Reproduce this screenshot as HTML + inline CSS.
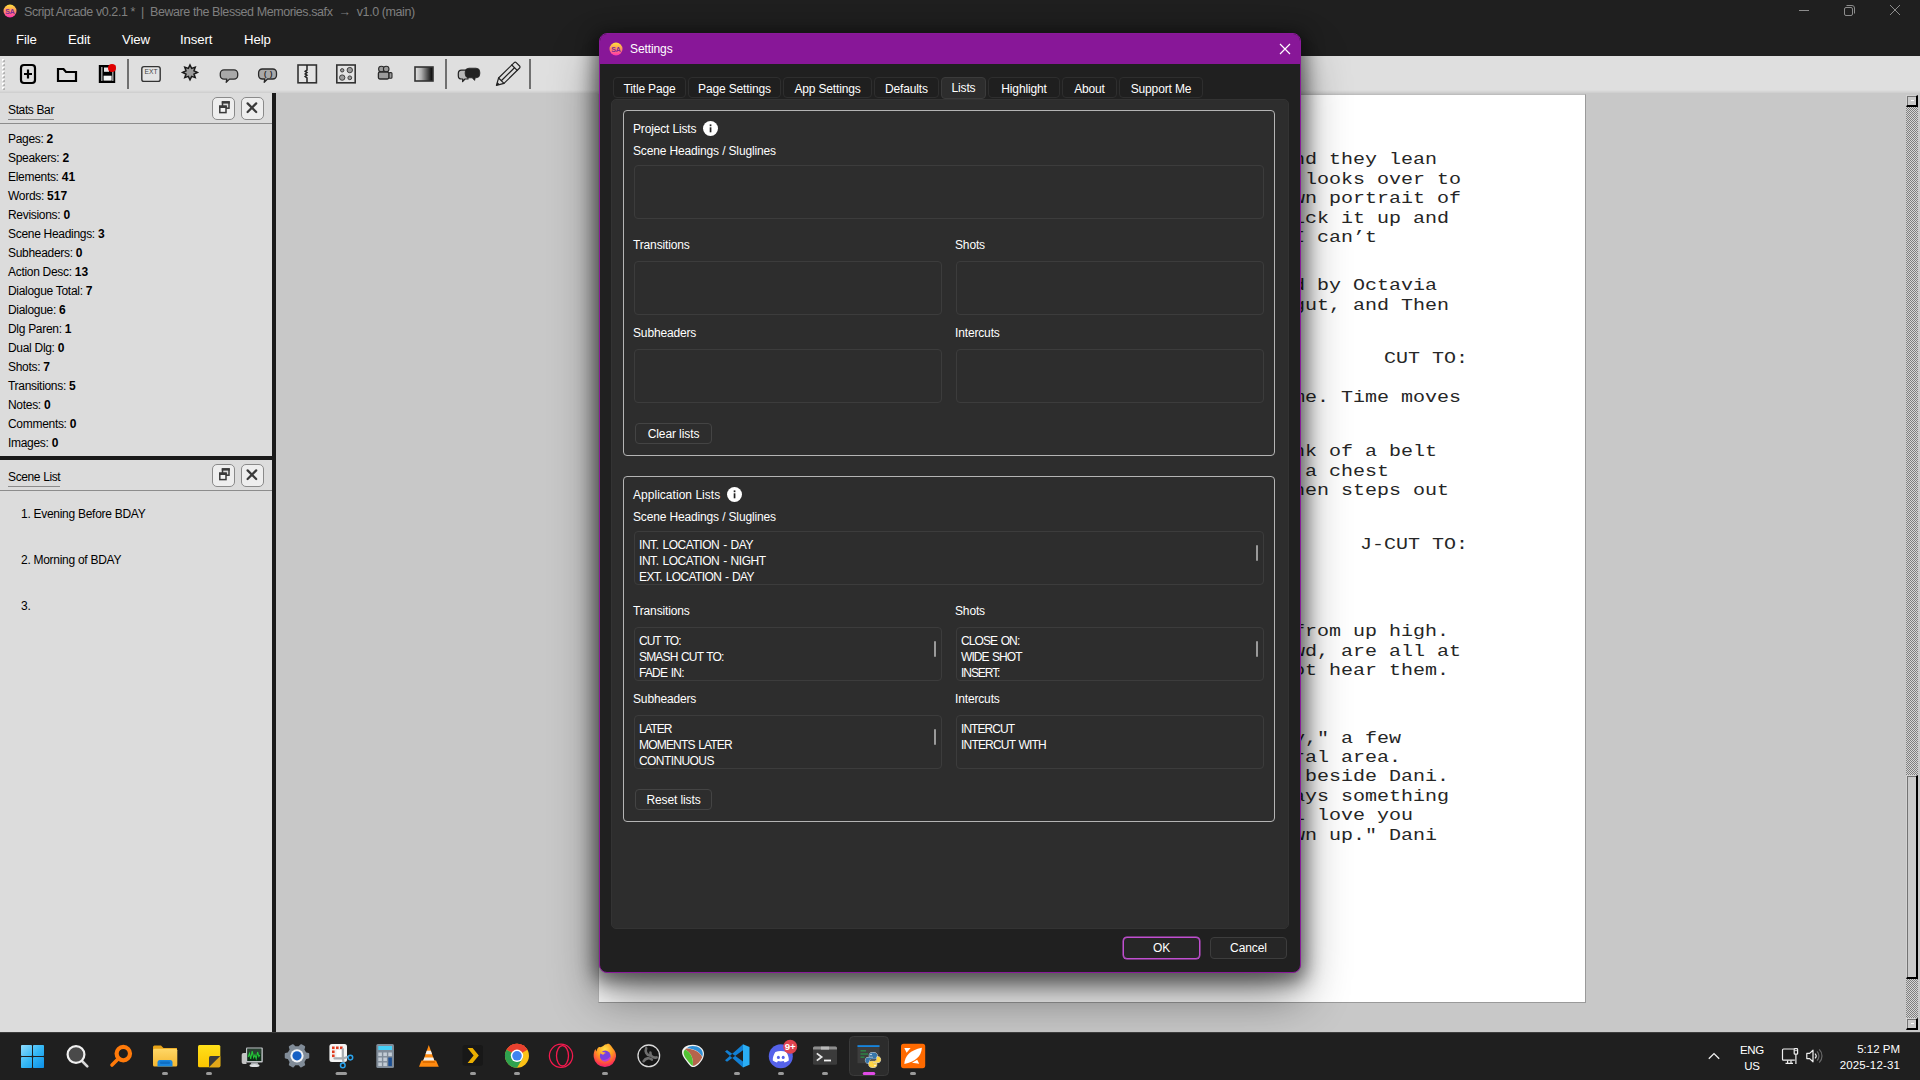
<!DOCTYPE html>
<html lang="en">
<head>
<meta charset="utf-8">
<title>Script Arcade - Settings</title>
<style>
*{box-sizing:border-box;margin:0;padding:0}
html,body{width:1920px;height:1080px;overflow:hidden;background:#c8c8c8}
body{position:relative;font-family:"Liberation Sans",sans-serif;font-size:12px;color:#000}
.abs{position:absolute}
.t{position:absolute;white-space:nowrap;line-height:16px;height:16px}
/* ---------- main window chrome ---------- */
#titlebar{left:0;top:0;width:1920px;height:56px;background:#1f1f1f}
#titlebar .ttl{color:#7f7f7f;font-size:12.5px;top:4px;letter-spacing:-.42px}
.menu{color:#fff;font-size:13.2px;top:32px;letter-spacing:-.1px}
#toolbar{left:0;top:56px;width:1920px;height:37px;background:linear-gradient(#dfdfdf 0,#dfdfdf 34px,#cdcdcd 37px)}
.tsep{position:absolute;top:3px;width:2px;height:30px;background:#707070}
/* ---------- docks ---------- */
#dockL{left:0;top:93px;width:272px;height:939px;background:#dcdcdc}
.vsplit{left:272px;top:93px;width:4px;height:939px;background:#1a1a1a}
.hsplit{left:0;top:456px;width:272px;height:4px;background:#1a1a1a}
.dtitle{font-size:12px;color:#000;border-bottom:1px solid #8a8a8a;height:18px;line-height:16px;letter-spacing:-.37px}
.dline{position:absolute;left:0;width:272px;height:1px;background:#8c8c8c}
.dbtn{position:absolute;width:23px;height:23px;border:1px solid #8a8a8a;border-radius:5px;background:#eee}
.stat{left:8px;font-size:12px;letter-spacing:-.3px}
.stat b{font-weight:bold;letter-spacing:0}
.scene{left:21px;font-size:12px;letter-spacing:-.28px}
/* ---------- canvas ---------- */
#canvas{left:276px;top:93px;width:1644px;height:939px;background:#c8c8c8}
#page{left:598px;top:94px;width:988px;height:909px;background:#fff;border:1px solid #9a9a9a;border-top-color:#bdbdbd;border-left-color:#bdbdbd}
.sl{position:absolute;white-space:pre;font-family:"Liberation Mono",monospace;font-size:16.5px;line-height:20px;height:20px;color:#262626;transform:scaleX(1.21212);transform-origin:0 0}
/* ---------- taskbar ---------- */
#taskbar{left:0;top:1032px;width:1920px;height:48px;background:#1f1f1f}
.tray{color:#fff;font-size:11.5px}

/* ---------- settings dialog ---------- */
#dlg{left:599px;top:33px;width:702px;height:940px;background:#202020;border:1px solid #8a1a9a;border-radius:8px;box-shadow:0 24px 48px 0 rgba(0,0,0,.45),0 4px 18px 5px rgba(0,0,0,.48);overflow:hidden;color:#fff}
#dlgttl{left:0;top:0;width:700px;height:30px;background:#881798}
#dlgttl .t{left:30px;top:7px;font-size:12px;color:#fff;letter-spacing:-.1px}
.tab{position:absolute;top:43px;height:21px;border:1px solid #2e2e2e;border-radius:4px;background:#1f1f1f;color:#fff;font-size:12px;line-height:23px;text-align:center;white-space:nowrap;letter-spacing:-.15px}
.tab.sel{top:43px;height:22px;line-height:21px;background:#2d2d2d;border-color:#3b3b3b}
#pane{left:11px;top:65px;width:678px;height:830px;background:#2d2d2d;border:1px solid #333;border-radius:5px}
.gb{position:absolute;left:23px;width:652px;border:1px solid #b4b4b4;border-radius:4px;background:#2d2d2d}
.lb{position:absolute;border:1px solid #3c3c3c;border-radius:4px;background:#2d2d2d;height:54px;overflow:hidden}
.lb .li{position:absolute;left:4px;word-spacing:1px;white-space:nowrap;font-size:12px;line-height:16px;letter-spacing:-.45px;color:#fff}
.lbl{position:absolute;white-space:nowrap;font-size:12px;line-height:16px;height:16px;color:#fff;letter-spacing:-.15px}
.btn{position:absolute;height:21px;padding-top:1px;border:1px solid #444;border-radius:4px;background:#2d2d2d;color:#fff;font-size:12px;line-height:19px;text-align:center;letter-spacing:-.1px}
.info{position:absolute;width:15px;height:15px;border-radius:50%;background:#fff}
.sbar{position:absolute;width:2px;height:16px;background:#9a9a9a;border-radius:1px}

#vsb{left:1906px;top:107px;width:12px;height:911px;background-color:#b4b4b4;background-image:repeating-conic-gradient(#7e7e7e 0 25%,#d6d6d6 0 50%);background-size:2px 2px}
.sbx{left:1906px;width:12px;background:#cbcbcb;border:1px solid #d2d2d2;border-right:2px solid #000;border-bottom:2px solid #000;box-shadow:inset 1px 1px 0 #737373}
</style>
</head>
<body>
<!-- MAIN WINDOW TITLE + MENU -->
<div id="titlebar" class="abs">
<svg class="abs" style="left:3px;top:4px" width="14" height="14" viewBox="0 0 14 14"><defs><linearGradient id="lg0" x1="0" y1="0" x2="0" y2="1"><stop offset="0" stop-color="#ffe23a"/><stop offset=".45" stop-color="#ff9a5a"/><stop offset="1" stop-color="#ff2fb4"/></linearGradient></defs><circle cx="7" cy="7" r="6.500" fill="url(#lg0)"/><text x="7" y="9.600" font-family="Liberation Sans,sans-serif" font-weight="bold" font-size="7" text-anchor="middle" fill="#7a2a9a">SA</text></svg>
  <div class="t ttl" style="left:24px">Script Arcade v0.2.1 *&nbsp; |&nbsp; Beware the Blessed Memories.safx&nbsp; →&nbsp; v1.0 (main)</div>
  <svg class="abs" style="left:1790px;top:0" width="130" height="23" viewBox="0 0 130 23"><g stroke="#8c8c8c" stroke-width="1" fill="none"><path d="M9 10.5 H19"/><rect x="54.5" y="7.5" width="8" height="8" rx="1.5"/><path d="M56.5 5.5 H62 a2.5 2.5 0 0 1 2.500 2.500 V13.500"/><path d="M100 5 L110 15 M110 5 L100 15"/></g></svg>
<div class="t menu" style="left:16px">File</div>
  <div class="t menu" style="left:68px">Edit</div>
  <div class="t menu" style="left:122px">View</div>
  <div class="t menu" style="left:180px">Insert</div>
  <div class="t menu" style="left:244px">Help</div>
</div>
<!-- TOOLBAR -->
<div id="toolbar" class="abs">
  <svg class="abs" style="left:0;top:0" width="600" height="37" viewBox="0 56 600 37">
<!-- grip handle -->
<g fill="#fff"><rect x="2" y="59" width="2" height="2"/><rect x="2" y="63" width="2" height="2"/><rect x="2" y="67" width="2" height="2"/><rect x="2" y="71" width="2" height="2"/><rect x="2" y="75" width="2" height="2"/><rect x="2" y="79" width="2" height="2"/><rect x="2" y="83" width="2" height="2"/><rect x="2" y="87" width="2" height="2"/></g>
<g fill="#a8a8a8"><rect x="3" y="60" width="2" height="2" opacity=".8"/><rect x="3" y="64" width="2" height="2" opacity=".8"/><rect x="3" y="68" width="2" height="2" opacity=".8"/><rect x="3" y="72" width="2" height="2" opacity=".8"/><rect x="3" y="76" width="2" height="2" opacity=".8"/><rect x="3" y="80" width="2" height="2" opacity=".8"/><rect x="3" y="84" width="2" height="2" opacity=".8"/><rect x="3" y="88" width="2" height="2" opacity=".8"/></g>
<g fill="#fff"><rect x="2" y="59" width="1.6" height="1.6"/><rect x="2" y="63" width="1.6" height="1.6"/><rect x="2" y="67" width="1.6" height="1.6"/><rect x="2" y="71" width="1.6" height="1.6"/><rect x="2" y="75" width="1.6" height="1.6"/><rect x="2" y="79" width="1.6" height="1.6"/><rect x="2" y="83" width="1.6" height="1.6"/><rect x="2" y="87" width="1.6" height="1.6"/></g>
<!-- new file -->
<rect x="21" y="65" width="14" height="18" rx="3" fill="none" stroke="#000" stroke-width="2.2"/>
<path d="M24 74 H32 M28 69.500 V78.500" stroke="#000" stroke-width="2.2" fill="none"/>
<!-- open folder -->
<path d="M58 81 V69 H63.500 L66 72 H76 V81 Z" fill="none" stroke="#000" stroke-width="2.2" stroke-linejoin="miter"/>
<!-- save -->
<rect x="98.800" y="65" width="16.400" height="18" fill="#000"/>
<rect x="101.300" y="67" width="1.100" height="14" fill="#cfcfcf"/>
<rect x="112.300" y="71" width="1.100" height="10" fill="#cfcfcf"/>
<rect x="104" y="67.500" width="5" height="4.300" fill="#e6e6e6"/>
<rect x="103.600" y="75.700" width="8" height="4.900" fill="#f6f6f6"/>
<circle cx="112" cy="68" r="4" fill="#e00000"/>
<!-- EXT -->
<rect x="141.800" y="66.600" width="18.400" height="14.800" rx="2.200" fill="#e4e4e4" stroke="#333" stroke-width="1.400"/>
<text x="151" y="74" font-family="Liberation Sans,sans-serif" font-size="7.500" text-anchor="middle" fill="#444" textLength="13" lengthAdjust="spacingAndGlyphs">EXT</text>
<!-- burst -->
<polygon points="190.00,65.00 191.65,68.43 195.23,67.17 193.97,70.75 197.40,72.40 193.97,74.05 195.23,77.63 191.65,76.37 190.00,79.80 188.35,76.37 184.77,77.63 186.03,74.05 182.60,72.40 186.03,70.75 184.77,67.17 188.35,68.43" fill="#9b9b9b" stroke="#1a1a1a" stroke-width="1.500" stroke-linejoin="miter"/>
<!-- speech bubble -->
<path d="M224 69.900 H234 a3.700 3.700 0 0 1 3.700 3.700 v1.800 a3.700 3.700 0 0 1 -3.700 3.700 H229.500 L226.200 82.400 L226.800 79.100 H224 a3.700 3.700 0 0 1 -3.700 -3.700 v-1.800 a3.700 3.700 0 0 1 3.700 -3.700 Z" fill="#a9a9a9" stroke="#2a2a2a" stroke-width="1.300" stroke-linejoin="round"/>
<!-- paren bubble -->
<path d="M262.300 69 H272.800 a3.700 3.700 0 0 1 3.700 3.700 v2.600 a3.700 3.700 0 0 1 -3.700 3.700 H267.500 L264.200 82.400 L264.800 79 H262.300 a3.700 3.700 0 0 1 -3.700 -3.700 v-2.600 a3.700 3.700 0 0 1 3.700 -3.700 Z" fill="#a9a9a9" stroke="#2a2a2a" stroke-width="1.300" stroke-linejoin="round"/>
<text x="265.300" y="76.100" font-family="Liberation Sans,sans-serif" font-weight="bold" font-size="7.200" text-anchor="middle" fill="#222">(</text><text x="271.200" y="76.100" font-family="Liberation Sans,sans-serif" font-weight="bold" font-size="7.200" text-anchor="middle" fill="#222">)</text>
<!-- split -->
<rect x="298" y="65" width="18.400" height="17.800" fill="#e4e4e4" stroke="#333" stroke-width="1.600"/>
<path d="M307 65 V70 l-1.800 1.300 l1.800 1.300 l-1.800 1.300 l1.800 1.300 l-1.800 1.300 l1.800 1.300 V82.800" fill="none" stroke="#222" stroke-width="1.500"/>
<!-- four dots -->
<rect x="336.800" y="65" width="18.400" height="17.800" fill="#e4e4e4" stroke="#333" stroke-width="1.600"/>
<circle cx="342.200" cy="70.300" r="1.700" fill="#9b9b9b" stroke="#333" stroke-width=".9"/>
<circle cx="349.800" cy="70.100" r="2.700" fill="#9b9b9b" stroke="#333" stroke-width=".9"/>
<circle cx="342.200" cy="77.600" r="2.700" fill="#9b9b9b" stroke="#333" stroke-width=".9"/>
<circle cx="349.800" cy="77.800" r="1.900" fill="#9b9b9b" stroke="#333" stroke-width=".9"/>
<!-- camera -->
<circle cx="381.400" cy="69" r="2.800" fill="#9b9b9b" stroke="#2a2a2a" stroke-width="1.100"/>
<circle cx="386.200" cy="69" r="2.800" fill="#9b9b9b" stroke="#2a2a2a" stroke-width="1.100"/>
<rect x="388.800" y="72.600" width="3.200" height="5.600" rx="1" fill="#9b9b9b" stroke="#2a2a2a" stroke-width="1.100"/>
<rect x="378.400" y="72" width="10.400" height="7" rx="1.400" fill="#9b9b9b" stroke="#2a2a2a" stroke-width="1.300"/>
<!-- gradient -->
<defs><linearGradient id="tg" x1="0" y1="0" x2="1" y2="0"><stop offset="0" stop-color="#e6e6e6"/><stop offset=".35" stop-color="#b0b0b0"/><stop offset=".9" stop-color="#161616"/><stop offset="1" stop-color="#111"/></linearGradient></defs>
<rect x="415" y="67" width="18" height="14" fill="url(#tg)" stroke="#333" stroke-width="1.600"/>
<!-- dual bubbles -->
<path d="M461.600 70.200 H468 V79 H465 L462.600 81.600 L462.800 79 H461.600 a3.300 3.300 0 0 1 -3.300 -3.300 v-2.200 a3.300 3.300 0 0 1 3.300 -3.300 Z" fill="#b9b9b9" stroke="#222" stroke-width="1.200" stroke-linejoin="round"/>
<path d="M469 68.200 H476 a3.800 3.800 0 0 1 3.800 3.800 v2 a3.800 3.800 0 0 1 -3.800 3.800 H475.200 L474.600 80.400 L472.200 77.800 H469 a3.800 3.800 0 0 1 -3.800 -3.800 v-2 a3.800 3.800 0 0 1 3.800 -3.800 Z" fill="#222" stroke="#222" stroke-width=".8" stroke-linejoin="round"/>
<!-- pencil -->
<g fill="none" stroke="#222" stroke-width="1.200" stroke-linejoin="round" stroke-linecap="round">
<path d="M496.400 85.400 L498.600 78 L514.200 62.600 a1.400 1.400 0 0 1 2 0 L519.600 66 a1.400 1.400 0 0 1 0 2 L504 83.400 Z"/>
<path d="M498.600 78 L504 83.400 M501.300 80.700 L514.500 67.700"/>
<path d="M511.800 65 L517.200 70.400"/>
</g>
<path d="M496.400 85.400 L497.400 82 L499.800 84.400 Z" fill="#222"/>
</svg>
  <div class="tsep" style="left:127px"></div>
  <div class="tsep" style="left:445px"></div>
  <div class="tsep" style="left:529px"></div>
</div>
<!-- CANVAS -->
<div id="canvas" class="abs"></div>
<div id="page" class="abs"></div>
<!-- SCRIPT TEXT -->
<div class="sl" style="left:861px;top:150px">Dani and Octavia sit side by side, and they lean</div>
<div class="sl" style="left:873px;top:170px">against each other quietly. Octavia looks over to</div>
<div class="sl" style="left:885px;top:189px">the mantle, where a small hand-drawn portrait of</div>
<div class="sl" style="left:861px;top:209px">the two of them sits. She moves to pick it up and</div>
<div class="sl" style="left:861px;top:228px">hold it close, smiling softly. She. I can’t</div>
<div class="sl" style="left:873px;top:276px">A hand on her shoulder. Dani is held by Octavia</div>
<div class="sl" style="left:909px;top:296px">for a long while. Lights slowly gut, and Then</div>
<div class="sl" style="left:837px;top:388px">The room has not changed since that time. Time moves</div>
<div class="sl" style="left:861px;top:442px">forward, marked only by the soft clink of a belt</div>
<div class="sl" style="left:921px;top:462px">buckle and the quiet opening of a chest</div>
<div class="sl" style="left:885px;top:481px">of drawers nearby. Dani dresses, then steps out</div>
<div class="sl" style="left:873px;top:622px">We see the neighbourhood, rooftops from up high.</div>
<div class="sl" style="left:933px;top:642px">Birds, children, a distant crowd, are all at</div>
<div class="sl" style="left:933px;top:661px">play, though from here we cannot hear them.</div>
<div class="sl" style="left:897px;top:729px">A hand-painted banner reads “Happy," a few</div>
<div class="sl" style="left:957px;top:748px">balloons hang about the central area.</div>
<div class="sl" style="left:945px;top:767px">Octavia arranges a few plates beside Dani.</div>
<div class="sl" style="left:933px;top:787px">Octavia leans in closely and says something</div>
<div class="sl" style="left:981px;top:806px">like, “No matter what, I’ll love you</div>
<div class="sl" style="left:993px;top:826px">even when you are all grown up." Dani</div>
<div class="sl" style="left:1384px;top:349px">CUT TO:</div>
<div class="sl" style="left:1360px;top:535px">J-CUT TO:</div>
<!-- CANVAS SCROLLBAR -->
<div class="abs" id="vsb"></div>
<div class="abs sbx" style="top:95px;height:12px"><div class="abs" style="left:4px;top:4px;width:3px;height:1px;background:#fff"></div></div>
<div class="abs sbx" style="top:775px;height:204px"></div>
<div class="abs sbx" style="top:1018px;height:12px"><div class="abs" style="left:4px;top:4px;width:3px;height:1px;background:#fff"></div></div>
<!-- LEFT DOCK -->
<div id="dockL" class="abs"></div>
<div class="abs vsplit"></div>
<div class="abs hsplit"></div>
<!-- STATS BAR -->
<div class="t dtitle" style="left:8px;top:102px">Stats Bar</div>
<div class="dline" style="top:123px"></div>
<div class="dbtn" style="left:212px;top:97px"><svg width="21" height="21" viewBox="0 0 21 21"><rect x="9.500" y="4" width="6.500" height="6.200" fill="#dcdcdc" stroke="#3a3a3a" stroke-width="1.500"/><rect x="8.800" y="3.200" width="8" height="2.400" fill="#3a3a3a"/><rect x="6.800" y="8.400" width="6.200" height="6.200" fill="#f4f4f4" stroke="#3a3a3a" stroke-width="1.500"/><rect x="6" y="7.400" width="7.800" height="2.600" fill="#3a3a3a"/></svg></div><div class="dbtn" style="left:241px;top:97px"><svg width="21" height="21" viewBox="0 0 21 21"><path d="M5.600 5.400 L14.200 14 M14.200 5.400 L5.600 14" stroke="#3a3a3a" stroke-width="2.200" stroke-linecap="round" fill="none"/></svg></div>
<div class="t stat" style="top:131px">Pages: <b>2</b></div>
<div class="t stat" style="top:150px">Speakers: <b>2</b></div>
<div class="t stat" style="top:169px">Elements: <b>41</b></div>
<div class="t stat" style="top:188px">Words: <b>517</b></div>
<div class="t stat" style="top:207px">Revisions: <b>0</b></div>
<div class="t stat" style="top:226px">Scene Headings: <b>3</b></div>
<div class="t stat" style="top:245px">Subheaders: <b>0</b></div>
<div class="t stat" style="top:264px">Action Desc: <b>13</b></div>
<div class="t stat" style="top:283px">Dialogue Total: <b>7</b></div>
<div class="t stat" style="top:302px">Dialogue: <b>6</b></div>
<div class="t stat" style="top:321px">Dlg Paren: <b>1</b></div>
<div class="t stat" style="top:340px">Dual Dlg: <b>0</b></div>
<div class="t stat" style="top:359px">Shots: <b>7</b></div>
<div class="t stat" style="top:378px">Transitions: <b>5</b></div>
<div class="t stat" style="top:397px">Notes: <b>0</b></div>
<div class="t stat" style="top:416px">Comments: <b>0</b></div>
<div class="t stat" style="top:435px">Images: <b>0</b></div>
<!-- SCENE LIST -->
<div class="t dtitle" style="left:8px;top:469px">Scene List</div>
<div class="dline" style="top:490px"></div>
<div class="dbtn" style="left:212px;top:464px"><svg width="21" height="21" viewBox="0 0 21 21"><rect x="9.500" y="4" width="6.500" height="6.200" fill="#dcdcdc" stroke="#3a3a3a" stroke-width="1.500"/><rect x="8.800" y="3.200" width="8" height="2.400" fill="#3a3a3a"/><rect x="6.800" y="8.400" width="6.200" height="6.200" fill="#f4f4f4" stroke="#3a3a3a" stroke-width="1.500"/><rect x="6" y="7.400" width="7.800" height="2.600" fill="#3a3a3a"/></svg></div><div class="dbtn" style="left:241px;top:464px"><svg width="21" height="21" viewBox="0 0 21 21"><path d="M5.600 5.400 L14.200 14 M14.200 5.400 L5.600 14" stroke="#3a3a3a" stroke-width="2.200" stroke-linecap="round" fill="none"/></svg></div>
<div class="t scene" style="top:506px">1. Evening Before BDAY</div>
<div class="t scene" style="top:552px">2. Morning of BDAY</div>
<div class="t scene" style="top:598px">3.</div>
<!-- SETTINGS DIALOG -->
<div id="dlg" class="abs">
<div id="dlgttl" class="abs"><div class="t">Settings</div>
<svg class="abs" style="left:678px;top:7.500px" width="14" height="14" viewBox="0 0 14 14"><path d="M2 2 L12 12 M12 2 L2 12" stroke="#fff" stroke-width="1.2" fill="none"/></svg>
<svg class="abs" style="left:9px;top:8px" width="14" height="14" viewBox="0 0 14 14"><defs><linearGradient id="lg1" x1="0" y1="0" x2="0" y2="1"><stop offset="0" stop-color="#ffe23a"/><stop offset=".45" stop-color="#ff9a5a"/><stop offset="1" stop-color="#ff2fb4"/></linearGradient></defs><circle cx="7" cy="7" r="6.5" fill="url(#lg1)"/><text x="7" y="9.6" font-family="Liberation Sans,sans-serif" font-weight="bold" font-size="7" text-anchor="middle" fill="#7a2a9a">SA</text></svg>
</div>
<div id="pane" class="abs"></div>
<div class="tab" style="left:13px;width:73px">Title Page</div>
<div class="tab" style="left:88px;width:93px">Page Settings</div>
<div class="tab" style="left:183px;width:89px">App Settings</div>
<div class="tab" style="left:274px;width:65px">Defaults</div>
<div class="tab sel" style="left:341px;width:45px">Lists</div>
<div class="tab" style="left:388px;width:72px">Highlight</div>
<div class="tab" style="left:462px;width:55px">About</div>
<div class="tab" style="left:519px;width:84px">Support Me</div>
<div class="gb" style="top:76px;height:346px">
<div class="lbl" style="left:9px;top:10px">Project Lists</div>
<div class="info" style="left:79px;top:10px"><svg width="15" height="15" viewBox="0 0 15 15"><rect x="6.7" y="6.3" width="1.7" height="5" fill="#222"/><rect x="6.7" y="3.4" width="1.7" height="1.8" fill="#222"/></svg></div>
<div class="lbl" style="left:9px;top:32px">Scene Headings / Sluglines</div>
<div class="lb" style="left:10px;top:54px;width:630px"></div>
<div class="lbl" style="left:9px;top:126px">Transitions</div>
<div class="lbl" style="left:331px;top:126px">Shots</div>
<div class="lb" style="left:10px;top:150px;width:308px"></div>
<div class="lb" style="left:332px;top:150px;width:308px"></div>
<div class="lbl" style="left:9px;top:214px">Subheaders</div>
<div class="lbl" style="left:331px;top:214px">Intercuts</div>
<div class="lb" style="left:10px;top:238px;width:308px"></div>
<div class="lb" style="left:332px;top:238px;width:308px"></div>
<div class="btn" style="left:11px;top:312px;width:77px">Clear lists</div>
</div>
<div class="gb" style="top:442px;height:346px">
<div class="lbl" style="left:9px;top:10px;letter-spacing:.03px">Application Lists</div>
<div class="info" style="left:103px;top:10px"><svg width="15" height="15" viewBox="0 0 15 15"><rect x="6.7" y="6.3" width="1.7" height="5" fill="#222"/><rect x="6.7" y="3.4" width="1.7" height="1.8" fill="#222"/></svg></div>
<div class="lbl" style="left:9px;top:32px">Scene Headings / Sluglines</div>
<div class="lb" style="left:10px;top:54px;width:630px"><div class="li" style="top:5px">INT. LOCATION - DAY</div><div class="li" style="top:21px">INT. LOCATION - NIGHT</div><div class="li" style="top:37px;letter-spacing:-0.61px">EXT. LOCATION - DAY</div><div class="sbar" style="left:621px;top:13px"></div></div>
<div class="lbl" style="left:9px;top:126px">Transitions</div>
<div class="lbl" style="left:331px;top:126px">Shots</div>
<div class="lb" style="left:10px;top:150px;width:308px"><div class="li" style="top:5px;letter-spacing:-0.98px">CUT TO:</div><div class="li" style="top:21px;letter-spacing:-0.83px">SMASH CUT TO:</div><div class="li" style="top:37px;letter-spacing:-0.79px">FADE IN:</div><div class="sbar" style="left:299px;top:13px"></div></div>
<div class="lb" style="left:332px;top:150px;width:308px"><div class="li" style="top:5px;letter-spacing:-0.89px">CLOSE ON:</div><div class="li" style="top:21px;letter-spacing:-0.93px">WIDE SHOT</div><div class="li" style="top:37px;letter-spacing:-1.06px">INSERT:</div><div class="sbar" style="left:299px;top:13px"></div></div>
<div class="lbl" style="left:9px;top:214px">Subheaders</div>
<div class="lbl" style="left:331px;top:214px">Intercuts</div>
<div class="lb" style="left:10px;top:238px;width:308px"><div class="li" style="top:5px;letter-spacing:-1.11px">LATER</div><div class="li" style="top:21px;letter-spacing:-0.81px">MOMENTS LATER</div><div class="li" style="top:37px;letter-spacing:-0.58px">CONTINUOUS</div><div class="sbar" style="left:299px;top:13px"></div></div>
<div class="lb" style="left:332px;top:238px;width:308px"><div class="li" style="top:5px;letter-spacing:-0.95px">INTERCUT</div><div class="li" style="top:21px;letter-spacing:-0.81px">INTERCUT WITH</div></div>
<div class="btn" style="left:11px;top:312px;width:77px">Reset lists</div>
</div>
<div class="btn" style="left:523px;top:903px;height:22px;width:77px;border-color:#c14fd1;border-width:1px;box-shadow:0 0 0 .5px #c14fd1;background:#262626">OK</div>
<div class="btn" style="left:610px;top:903px;height:22px;width:77px;background:#262626;border-color:#3d3d3d">Cancel</div>
</div>
<!-- TASKBAR -->
<div id="taskbar" class="abs">
<svg class="abs" style="left:0;top:0" width="1920" height="48" viewBox="0 1032 1920 48">
<defs>
<linearGradient id="wg" gradientUnits="userSpaceOnUse" x1="21" y1="1045" x2="44" y2="1068"><stop offset="0" stop-color="#8fdcff"/><stop offset=".5" stop-color="#35b8f5"/><stop offset="1" stop-color="#0c8fe6"/></linearGradient>
<linearGradient id="fg" x1="0" y1="0" x2="0" y2="1"><stop offset="0" stop-color="#ffd766"/><stop offset="1" stop-color="#f4b731"/></linearGradient>
<linearGradient id="sg" x1="0" y1="0" x2="0" y2="1"><stop offset="0" stop-color="#ffe01a"/><stop offset="1" stop-color="#fbc400"/></linearGradient>
<radialGradient id="ffg" cx=".5" cy=".25" r=".8"><stop offset="0" stop-color="#ffe14a"/><stop offset=".45" stop-color="#ff9a1f"/><stop offset=".8" stop-color="#ff3c4a"/><stop offset="1" stop-color="#e31587"/></radialGradient>
<linearGradient id="vg" x1="0" y1="0" x2="1" y2="0"><stop offset="0" stop-color="#0a6fc2"/><stop offset="1" stop-color="#2bb0f5"/></linearGradient>
</defs>
<rect x="0" y="1032" width="1920" height="1" fill="#3c3c3c"/>
<!-- active app highlight -->
<rect x="849.500" y="1036.500" width="39" height="39" rx="4" fill="#2c2c2c" stroke="#3a3a3a" stroke-width="1"/>
<!-- start -->
<g fill="url(#wg)"><rect x="21" y="1045" width="11" height="11" rx=".8"/><rect x="33" y="1045" width="11" height="11" rx=".8"/><rect x="21" y="1057" width="11" height="11" rx=".8"/><rect x="33" y="1057" width="11" height="11" rx=".8"/></g>
<!-- search -->
<path d="M82 1061 L87.300 1066.400" stroke="#d8d8d8" stroke-width="2.600" stroke-linecap="round"/>
<circle cx="76" cy="1054.500" r="8.400" fill="#4a4a4a" stroke="#f0f0f0" stroke-width="2.200"/>
<!-- orange search (Everything) -->
<path d="M118 1059 L112 1065" stroke="#ff7a0a" stroke-width="3.600" stroke-linecap="round"/>
<circle cx="123.300" cy="1053.600" r="6.700" fill="none" stroke="#ff7a0a" stroke-width="4.200"/>
<!-- file explorer -->
<path d="M153 1047 a1.500 1.500 0 0 1 1.500 -1.500 H161 l2.500 2.500 H177 V1053 H153 Z" fill="#e8a317"/>
<rect x="153" y="1048.800" width="24.300" height="17.600" rx="1.500" fill="url(#fg)"/>
<path d="M157.500 1066.400 V1062.500 a2.500 2.500 0 0 1 2.500 -2.500 H170 a2.500 2.500 0 0 1 2.500 2.500 V1066.400 Z" fill="#1a86dd"/>
<rect x="160" y="1061.500" width="10" height="2.500" rx="1" fill="#0f6fc4"/>
<rect x="162.0" y="1072" width="6" height="3" rx="1.5" fill="#9a9a9a"/>
<!-- sticky notes -->
<rect x="198" y="1045" width="22.300" height="22.300" rx="1.500" fill="url(#sg)"/>
<path d="M220.300 1056 V1065.800 a1.500 1.500 0 0 1 -1.500 1.500 H209 Z" fill="#e3a81a"/>
<path d="M209 1067.300 V1057.500 a1.500 1.500 0 0 1 1.500 -1.500 H220.300 Z" fill="#3b3a39"/>
<rect x="206.0" y="1072" width="6" height="3" rx="1.5" fill="#9a9a9a"/>
<!-- process monitor -->
<path d="M246.500 1053 h-3 a1.800 1.800 0 0 0 -1.800 1.800 v7.400 a1.800 1.800 0 0 0 1.800 1.800 h3 Z" fill="#c4c4c4"/>
<rect x="246" y="1047.400" width="16.800" height="15" rx="1" fill="#c2c5c9"/>
<rect x="247.200" y="1048.600" width="14.200" height="12.400" fill="#0f2c18"/>
<path d="M247.200 1048.600 h14.200 v5 l-14.200 3 Z" fill="#4a5a50" opacity=".45"/>
<path d="M248.200 1057 l1.300 -3.600 l1.200 5.400 l1.500 -7.600 l1.400 6.400 l1.400 -2.600 l1.200 3.600 l1.400 -6.600 l1.300 4.600 l1 -1.800" fill="none" stroke="#24c638" stroke-width="1.100"/>
<path d="M251.500 1062.400 h6 l1 2.400 h-8 Z" fill="#a9adb2"/>
<ellipse cx="254.500" cy="1065.600" rx="5" ry="1.500" fill="#dcdfe2"/>
<!-- settings -->
<polygon points="305.45,1053.34 308.26,1054.02 308.26,1057.58 305.45,1058.26 303.35,1061.89 304.17,1064.66 301.09,1066.44 299.10,1064.35 294.90,1064.35 292.91,1066.44 289.83,1064.66 290.65,1061.89 288.55,1058.26 285.74,1057.58 285.74,1054.02 288.55,1053.34 290.65,1049.71 289.83,1046.94 292.91,1045.16 294.90,1047.25 299.10,1047.25 301.09,1045.16 304.17,1046.94 303.35,1049.71" fill="#818c98" stroke="#818c98" stroke-width="2" stroke-linejoin="round"/>
<circle cx="297" cy="1055.800" r="6.600" fill="#f3f5f7"/>
<circle cx="297" cy="1055.800" r="4.600" fill="#1660c4"/>
<!-- snipping tool -->
<rect x="329.400" y="1044" width="17.600" height="18" rx="2.500" fill="#f4f4f4"/>
<g fill="#e03a1e"><rect x="332" y="1046.500" width="2.600" height="2.600"/><rect x="336" y="1046.500" width="2.600" height="2.600"/><rect x="340" y="1046.500" width="2.600" height="2.600"/><rect x="332" y="1050.500" width="2.600" height="2.600"/><rect x="332" y="1054.500" width="2.600" height="2.600"/></g>
<path d="M336 1049.500 H343 V1058 H336 Z" fill="#fff" stroke="#ddd" stroke-width=".6"/>
<path d="M334.500 1058.400 H343.500 L347.500 1057 M342.800 1049 V1058.400 L343.600 1062.500" fill="none" stroke="#a8adb3" stroke-width="2.200" stroke-linecap="round"/>
<circle cx="350.400" cy="1057.600" r="2.300" fill="none" stroke="#2aa3ec" stroke-width="1.500"/>
<circle cx="342.800" cy="1065.400" r="2.300" fill="none" stroke="#2aa3ec" stroke-width="1.500"/>
<rect x="335.55" y="1072" width="11.5" height="3" rx="1.5" fill="#9a9a9a"/>
<!-- calculator -->
<rect x="376.300" y="1044" width="17.700" height="24" rx="1.500" fill="#7f8b98"/>
<rect x="378.300" y="1046" width="13.700" height="4" fill="#45d0f7"/>
<g fill="#c3ccd5"><rect x="378.300" y="1052.500" width="3.600" height="3.600"/><rect x="383.300" y="1052.500" width="3.600" height="3.600"/><rect x="388.300" y="1052.500" width="3.600" height="3.600"/><rect x="378.300" y="1057.500" width="3.600" height="3.600"/><rect x="383.300" y="1057.500" width="3.600" height="3.600"/><rect x="378.300" y="1062.500" width="3.600" height="3.600"/><rect x="383.300" y="1062.500" width="3.600" height="3.600"/></g>
<rect x="388.300" y="1057.500" width="3.600" height="8.600" fill="#1c4f93"/>
<!-- vlc -->
<path d="M428.800 1045 L434.500 1061 H423.100 Z" fill="#ff8a0f"/>
<path d="M426.700 1050.800 H430.900 L432.100 1054.200 H425.500 Z M424.400 1057.400 H433.200 L434.500 1061 H423.100 Z" fill="#f1f1f1"/>
<path d="M421.500 1060.500 H436 L438.800 1066.800 H419 Z" fill="#ff8a0f"/>
<path d="M423.100 1061 H434.500 L435 1063 H422.600 Z" fill="#e06f00"/>
<!-- plex -->
<rect x="462.500" y="1045" width="20.500" height="20.800" rx="2.500" fill="#181818"/>
<path d="M467.600 1048 H472.600 L478.800 1055.500 L472.600 1063 H467.600 L473.600 1055.500 Z" fill="#ebaf00"/>
<rect x="470.0" y="1072" width="6" height="3" rx="1.5" fill="#9a9a9a"/>
<!-- chrome -->
<circle cx="517" cy="1055.800" r="12" fill="#fbc116"/>
<path d="M517 1055.800 L506.600 1049.800 A12 12 0 0 1 527.400 1049.800 Z" fill="#e8412f"/>
<path d="M517 1055.800 L506.600 1049.800 A12 12 0 0 0 517 1067.800 L522.800 1058 Z" fill="#2fa24f"/>
<path d="M506.600 1049.800 A12 12 0 0 1 527.400 1049.800 H517 Z" fill="#e8412f"/>
<circle cx="517" cy="1055.800" r="6.200" fill="#fff"/>
<circle cx="517" cy="1055.800" r="4.800" fill="#3f83f1"/>
<rect x="514.0" y="1072" width="6" height="3" rx="1.5" fill="#9a9a9a"/>
<!-- opera gx -->
<circle cx="561" cy="1055.800" r="11.600" fill="none" stroke="#f5194e" stroke-width="1.300"/>
<ellipse cx="562.500" cy="1055.800" rx="6" ry="10.200" fill="none" stroke="#f5194e" stroke-width="1.300"/>
<!-- firefox -->
<path d="M605 1044.600 c2 -1 3.200 -0.400 3.600 -1.200 c1.600 1.400 3.400 3 4.400 5.200 c2.400 2.600 3.200 5.600 3 8 a11.200 11.200 0 0 1 -22.300 0.400 c-.3 -3.600 .5 -6 1.700 -8 c.2 1 .6 1.800 1.200 2.400 c.2 -2 1 -3.400 2.400 -4.400 c1.600 .4 3 .2 6 -2.400 Z" fill="url(#ffg)"/>
<circle cx="605.200" cy="1056" r="5.400" fill="#7a3fe0"/>
<path d="M600 1052.400 c2 -.8 4.400 -.6 6 .6 c-1.200 .2 -2 .8 -2.400 1.600 c-1.400 .2 -2.600 -.8 -3.600 -2.200 Z" fill="#ffb13a"/>
<path d="M610.600 1056 a5.400 5.400 0 0 1 -9.400 3.600 c3 1 6.600 .2 9.400 -3.600 Z" fill="#c93ad0"/>
<rect x="602.0" y="1072" width="6" height="3" rx="1.5" fill="#9a9a9a"/>
<!-- obs -->
<circle cx="648.800" cy="1055.800" r="10.800" fill="#151515" stroke="#d9d9d9" stroke-width="1.300"/>
<g fill="none" stroke="#6e6e6e" stroke-width="2.600" stroke-linecap="round"><path d="M646.200 1048.200 c-1.400 3.600 .2 6.600 3.600 7.400"/><path d="M656.600 1057.400 c-3.800 .8 -6.400 -1.400 -6.200 -4.800"/><path d="M643.600 1061.200 c2.200 -3.200 5.600 -3.800 8.200 -1.600"/></g>
<!-- reaper-like -->
<path d="M692.600 1044.800 c7 0 11.400 4 11.400 9 c0 5.600 -5.400 11.600 -9 13 c-2.400 .9 -4.400 -.3 -6 -2.400 c-3.600 -4.800 -7 -8 -7 -12.400 c0 -4 4.600 -7.200 10.600 -7.200 Z" fill="#f2f2f2"/>
<path d="M692.600 1046 c6.200 0 10.200 3.400 10.200 7.800 c0 1 -.2 2 -.6 3 c-2 -4.600 -7 -8 -15.400 -8.600 c1.600 -1.400 3.600 -2.200 5.800 -2.200 Z" fill="#2f8fd6"/>
<path d="M686.400 1048.600 c8.400 .6 13.800 4 15.800 8.600 c-1.600 3.800 -4.800 7.200 -7.600 8.400 c-.6 .3 -1.200 .3 -1.800 .2 c.8 -7 -1.400 -13 -7.600 -16.400 c.4 -.3 .8 -.6 1.200 -.8 Z" fill="#b5644c"/>
<path d="M685.200 1049.400 c6.200 3.400 8.400 9.400 7.600 16.400 c-1 -.2 -1.800 -.9 -2.600 -2 c-3.400 -4.600 -6.600 -7.400 -6.600 -11.400 c0 -1.100 .6 -2.100 1.600 -3 Z" fill="#52c234"/>
<!-- vs code -->
<path d="M725 1051.600 l2 -1.600 l16 11.500 v6.100 Z M725 1060.200 l2 1.600 l16 -11.500 v-6.100 Z" fill="#1280d4"/>
<path d="M743 1044.200 L749.500 1047 V1064.800 L743 1067.600 Z" fill="#2aaef5"/>
<rect x="731" y="1072" width="6" height="3" rx="1.500" fill="#9a9a9a" transform="translate(3 0)"/>
<!-- discord -->
<circle cx="780.800" cy="1056.200" r="12" fill="#5562ea"/>
<path d="M775.400 1052 c3.400 -1.400 7.400 -1.400 10.800 0 c1.800 2.600 2.800 5.600 2.600 8.600 c-1.400 1 -2.800 1.600 -4.200 2 l-.9 -1.500 c-1.800 .5 -4 .5 -5.800 0 l-.9 1.500 c-1.400 -.4 -2.800 -1 -4.200 -2 c-.2 -3 .8 -6 2.600 -8.600 Z" fill="#fff"/>
<ellipse cx="778.400" cy="1057.400" rx="1.500" ry="1.700" fill="#5562ea"/><ellipse cx="783.200" cy="1057.400" rx="1.500" ry="1.700" fill="#5562ea"/>
<circle cx="790.200" cy="1046.800" r="7" fill="#e0434f"/>
<text x="790.200" y="1050.200" font-family="Liberation Sans,sans-serif" font-weight="bold" font-size="9.500" text-anchor="middle" fill="#fff" textLength="11" lengthAdjust="spacingAndGlyphs">9+</text>
<rect x="778.0" y="1072" width="6" height="3" rx="1.5" fill="#9a9a9a"/>
<!-- terminal -->
<rect x="813" y="1046.600" width="24" height="18.200" rx="1.500" fill="#3b3b3b"/>
<path d="M813 1049.600 V1048.100 a1.500 1.500 0 0 1 1.500 -1.500 H835.500 a1.500 1.500 0 0 1 1.500 1.500 V1049.600 Z" fill="#8e8e8e"/>
<rect x="821" y="1046.600" width="8" height="3" fill="#b9b9b9"/>
<path d="M816.800 1053.400 L821.600 1057 L816.800 1060.600" fill="none" stroke="#e8e8e8" stroke-width="1.800"/>
<rect x="824" y="1059.600" width="7" height="1.800" fill="#f2f2f2"/>
<rect x="822.0" y="1072" width="6" height="3" rx="1.5" fill="#9a9a9a"/>
<!-- python app (active) -->
<rect x="857.500" y="1045.200" width="22" height="18" fill="#3d3d3d"/>
<rect x="857.500" y="1045.200" width="22" height="1.800" fill="#1585e0"/>
<g fill="#2f7d44"><rect x="860.500" y="1050" width="5.500" height="1.600"/><rect x="860.500" y="1053.200" width="7.500" height="1.600"/><rect x="860.500" y="1056.400" width="4" height="1.600"/></g>
<g transform="translate(865 1052)" stroke="#ececec" stroke-width=".9" paint-order="stroke" stroke-linejoin="round">
<path d="M7.900 .500 C5 .500 4.300 1.700 4.300 3 V4.800 H8.100 V5.400 H2.900 C1.300 5.400 .400 6.600 .400 8.400 C.400 10.200 1.300 11.200 2.700 11.200 H4.100 V9.200 C4.100 7.800 5.200 6.700 6.600 6.700 H10.200 C11.300 6.700 12.100 5.900 12.100 4.800 V3 C12.100 1.600 11 .500 7.900 .500 Z" fill="#3776ab"/>
<path d="M8.100 15.500 C11 15.500 11.700 14.300 11.700 13 V11.200 H7.900 V10.600 H13.100 C14.700 10.600 15.600 9.400 15.600 7.600 C15.600 5.800 14.700 4.800 13.300 4.800 H11.900 V6.800 C11.900 8.200 10.800 9.300 9.400 9.300 H5.800 C4.700 9.300 3.900 10.100 3.900 11.200 V13 C3.900 14.400 5 15.500 8.100 15.500 Z" fill="#ffd545"/>
</g>
<circle cx="871" cy="1054.600" r=".75" fill="#fff"/><circle cx="875" cy="1065.400" r=".75" fill="#fff"/>
<rect x="862.75" y="1072" width="12.5" height="3" rx="1.5" fill="#e04be6"/>
<!-- orange app -->
<rect x="901" y="1043.800" width="24.200" height="24.400" rx="2.600" fill="#ff6a00"/>
<path d="M904.300 1064 C904.600 1056.500 910 1050 921.900 1047.800 C921.400 1056.500 915 1062 904.300 1064 Z" fill="#fff"/>
<path d="M904.300 1048 H910.600 L906.600 1052.800 Z M912 1062.800 L919.200 1063.800 L917.200 1059.800 Z" fill="#fff"/>
<rect x="910" y="1072" width="6" height="3" rx="1.500" fill="#9a9a9a"/>
<!-- system tray -->
<path d="M1708.800 1058.800 L1714 1053.600 L1719.200 1058.800" fill="none" stroke="#f2f2f2" stroke-width="1.300"/>
<g fill="none" stroke="#f0f0f0" stroke-width="1.200"><path d="M1794 1049 H1783.500 a1 1 0 0 0 -1 1 V1059.200 a1 1 0 0 0 1 1 H1794.800"/><path d="M1785.500 1063.400 H1793 M1787.600 1060.400 V1063.400 M1791 1060.400 V1063.400"/><rect x="1794.200" y="1048.600" width="3.400" height="5.600" rx=".8"/><path d="M1795.900 1054.200 V1064"/><path d="M1794.600 1050.600 h2.600" stroke-width=".8"/></g>
<g fill="none" stroke="#f0f0f0" stroke-width="1.200" stroke-linejoin="round"><path d="M1806.800 1053.400 H1809.600 L1813 1050.200 V1061.800 L1809.600 1058.600 H1806.800 Z"/><path d="M1815 1053.600 a3.400 3.400 0 0 1 0 4.800"/></g>
<g fill="none" stroke="#6a6a6a" stroke-width="1.200"><path d="M1817 1051.400 a6.400 6.400 0 0 1 0 9.200"/><path d="M1819.200 1049.400 a9.200 9.200 0 0 1 0 13.200"/></g>
</svg>
<div class="t tray" style="left:1732px;width:40px;text-align:center;top:10px;letter-spacing:-.3px">ENG</div>
<div class="t tray" style="left:1732px;width:40px;text-align:center;top:26px;letter-spacing:-.3px">US</div>
<div class="t tray" style="right:20px;top:9px;letter-spacing:0">5:12 PM</div>
<div class="t tray" style="right:20px;top:25px;letter-spacing:.15px">2025-12-31</div>
</div>
</body>
</html>
